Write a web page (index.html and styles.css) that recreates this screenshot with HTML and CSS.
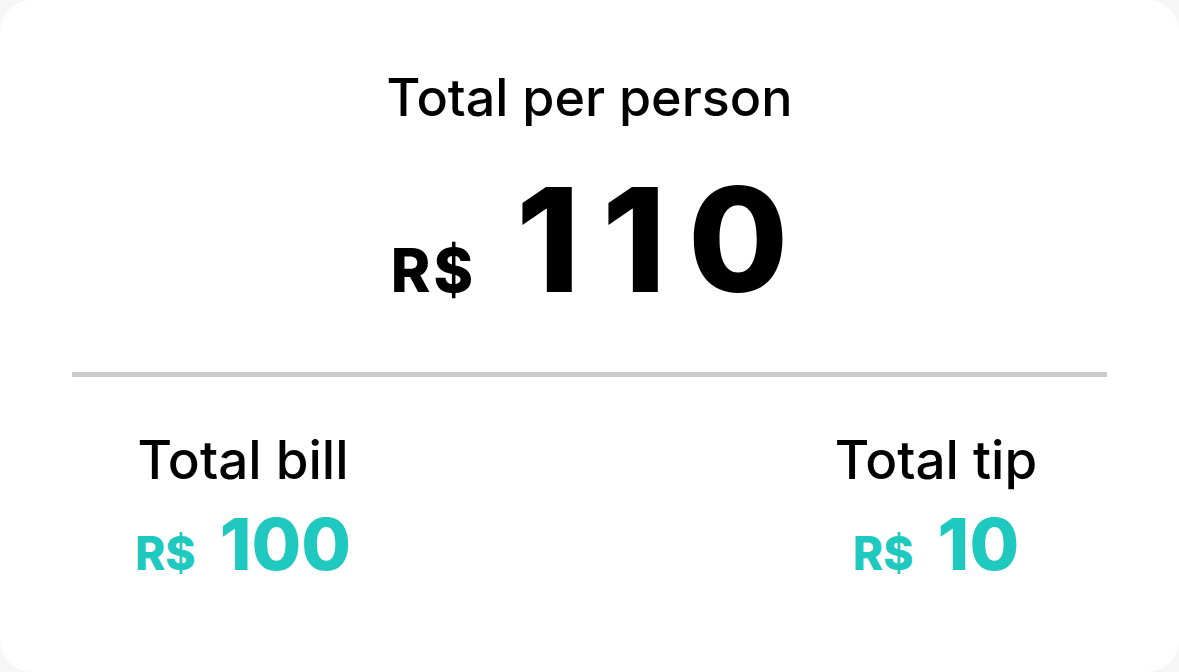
FILE: index.html
```html
<!DOCTYPE html>
<html lang="en">
<head>
<meta charset="utf-8">
<title>Tip result</title>
<link rel="stylesheet" href="styles.css">
</head>
<body>
<main class="card">
  <section class="summary">
    <h1 class="summary-title">Total per person</h1>
    <p class="summary-amount"><span class="currency">R$</span><span class="value">110</span></p>
  </section>
  <hr class="divider">
  <section class="stats">
    <div class="stat">
      <h2 class="stat-title">Total bill</h2>
      <p class="stat-amount"><span class="currency">R$</span><span class="value">100</span></p>
    </div>
    <div class="stat">
      <h2 class="stat-title">Total tip</h2>
      <p class="stat-amount"><span class="currency">R$</span><span class="value">10</span></p>
    </div>
  </section>
</main>
</body>
</html>
```
FILE: styles.css
```css
html, body {
  margin: 0;
  padding: 0;
  height: 100%;
}
body {
  background: #f6f6f6;
  font-family: "Inter", "Lato", sans-serif;
  color: #000;
}
.card {
  box-sizing: border-box;
  height: 672px;
  width: 1179px;
  background: #fff;
  border-radius: 32px;
  padding: 72px 72px 0;
  display: flex;
  flex-direction: column;
}
.summary {
  display: flex;
  flex-direction: column;
  align-items: center;
}
.summary-title {
  margin: 0;
  font-size: 52px;
  line-height: 1;
  font-weight: 500;
}
.summary-amount {
  margin: 43px 0 0;
  line-height: 1;
  display: flex;
  align-items: baseline;
  gap: 40px;
}
.summary-amount .currency {
  font-size: 60px;
  font-weight: 800;
  letter-spacing: 3px;
}
.summary-amount .value {
  font-size: 145px;
  font-weight: 800;
  letter-spacing: 22px;
  margin-right: -22px;
}
.divider {
  margin: 60px 0 0;
  border: 0;
  height: 5px;
  background: #cbcbcb;
}
.stats {
  display: grid;
  grid-template-columns: 342px 342px;
  justify-content: space-between;
  margin-top: 57px;
}
.stat {
  display: flex;
  flex-direction: column;
  align-items: center;
}
.stat-title {
  margin: 0;
  font-size: 53px;
  line-height: 1;
  font-weight: 500;
}
.stat-amount {
  margin: 21px 0 0;
  line-height: 1;
  display: flex;
  align-items: baseline;
  gap: 24px;
  color: #1fc9bf;
}
.stat-amount .currency {
  font-size: 46px;
  font-weight: 800;
}
.stat-amount .value {
  font-size: 72px;
  font-weight: 800;
}
```
